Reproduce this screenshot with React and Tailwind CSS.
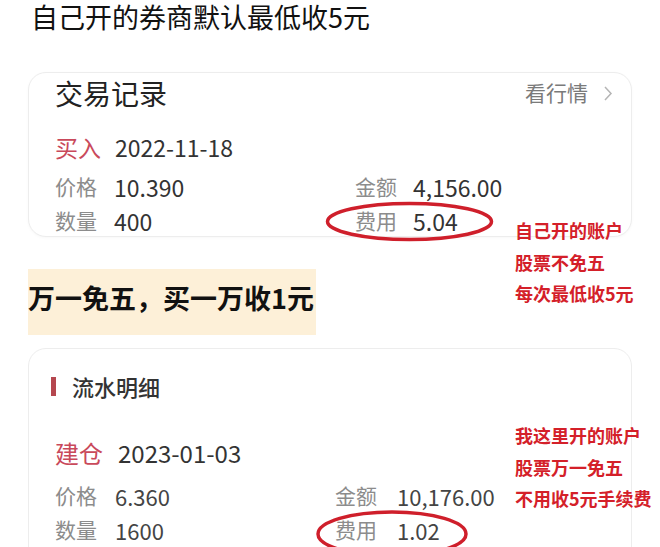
import React from "react";

const font = { fontFamily: '"Noto Sans CJK SC", "Noto Sans", sans-serif' };

function Chevron() {
  return (
    <svg width="10" height="15" viewBox="0 0 10 15" className="ml-[15px]">
      <polyline points="2,1 8,7.5 2,14" fill="none" stroke="#b5b5b5" strokeWidth="1.5" />
    </svg>
  );
}

export default function App() {
  return (
    <div
      className="relative w-[660px] h-[547px] overflow-hidden bg-white text-[#222]"
      style={font}
    >
      <div className="h-[32px] pl-[31px] text-[27px] leading-[34px] text-[#111]">
        自己开的券商默认最低收5元
      </div>

      {/* Card 1 */}
      <div className="mx-[28px] mt-[40px] h-[165px] rounded-[18px] border border-[#ededed] bg-white shadow-[0_1px_3px_rgba(0,0,0,0.03)]">
        <div className="flex h-[40px] items-center justify-between pl-[26px] pr-[18px]">
          <span className="text-[28px] text-[#222]">交易记录</span>
          <span className="flex items-center text-[21px] text-[#7a7a7a]">
            看行情
            <Chevron />
          </span>
        </div>
        <div className="mt-[14px] flex h-[40px] items-center pl-[26px]">
          <span className="w-[60px] text-[23px] text-[#c9495b]">买入</span>
          <span className="text-[23px] text-[#333]">2022-11-18</span>
        </div>
        <div className="mt-[3px] grid grid-cols-[300px_1fr] pl-[26px]">
          <div className="flex h-[34px] items-center">
            <span className="w-[59px] text-[21px] text-[#8c8c8c]">价格</span>
            <span className="text-[23px] text-[#333]">10.390</span>
          </div>
          <div className="flex h-[34px] items-center">
            <span className="w-[58px] text-[21px] text-[#8c8c8c]">金额</span>
            <span className="text-[23px] text-[#333]">4,156.00</span>
          </div>
          <div className="flex h-[34px] items-center">
            <span className="w-[59px] text-[21px] text-[#8c8c8c]">数量</span>
            <span className="text-[23px] text-[#333]">400</span>
          </div>
          <div className="flex h-[34px] items-center">
            <span className="w-[58px] text-[21px] text-[#8c8c8c]">费用</span>
            <span className="text-[23px] text-[#333]">5.04</span>
          </div>
        </div>
      </div>

      {/* Highlight */}
      <div className="ml-[28px] mt-[32px] flex h-[66px] w-[288px] items-center bg-[#fdf0d8] pb-[8px]">
        <span className="text-[27px] font-bold text-[#111]">
          万一免五，买一万收1元
        </span>
      </div>

      {/* Card 2 */}
      <div className="mx-[28px] mt-[13px] h-[240px] rounded-[18px] border border-[#ededed] bg-white">
        <div className="mt-[17px] flex h-[40px] items-center pl-[22px]">
          <span className="h-[19px] w-[5px] bg-[#b5474f]" />
          <span className="ml-[16px] text-[22px] font-medium text-[#333]">流水明细</span>
        </div>
        <div className="mt-[27px] flex h-[40px] items-center pl-[26px]">
          <span className="w-[63px] text-[24px] text-[#c9495b]">建仓</span>
          <span className="text-[24px] text-[#333]">2023-01-03</span>
        </div>
        <div className="mt-[6px] grid grid-cols-[280px_1fr] pl-[26px]">
          <div className="flex h-[34px] items-center">
            <span className="w-[60px] text-[21px] text-[#8c8c8c]">价格</span>
            <span className="text-[22px] text-[#444]">6.360</span>
          </div>
          <div className="flex h-[34px] items-center">
            <span className="w-[62px] text-[21px] text-[#8c8c8c]">金额</span>
            <span className="text-[22px] text-[#444]">10,176.00</span>
          </div>
          <div className="flex h-[34px] items-center">
            <span className="w-[60px] text-[21px] text-[#8c8c8c]">数量</span>
            <span className="text-[22px] text-[#444]">1600</span>
          </div>
          <div className="flex h-[34px] items-center">
            <span className="w-[62px] text-[21px] text-[#8c8c8c]">费用</span>
            <span className="text-[22px] text-[#444]">1.02</span>
          </div>
        </div>
      </div>

      {/* Ellipses */}
      <svg className="pointer-events-none absolute left-0 top-0" width="660" height="547">
        <ellipse cx="409.5" cy="221.5" rx="82" ry="18" fill="none" stroke="#cf1f2b" strokeWidth="3.5" />
        <ellipse cx="392" cy="534" rx="74" ry="22" fill="none" stroke="#cf1f2b" strokeWidth="3.5" />
      </svg>

      {/* Annotations */}
      <div className="absolute left-[515px] top-[215px] flex flex-col text-[18px] font-bold leading-[31.5px] text-[#d42029]">
        <span>自己开的账户</span>
        <span>股票不免五</span>
        <span>每次最低收5元</span>
      </div>
      <div className="absolute left-[515px] top-[420px] flex flex-col text-[18px] font-bold leading-[31.5px] text-[#d42029]">
        <span>我这里开的账户</span>
        <span>股票万一免五</span>
        <span>不用收5元手续费</span>
      </div>
    </div>
  );
}
